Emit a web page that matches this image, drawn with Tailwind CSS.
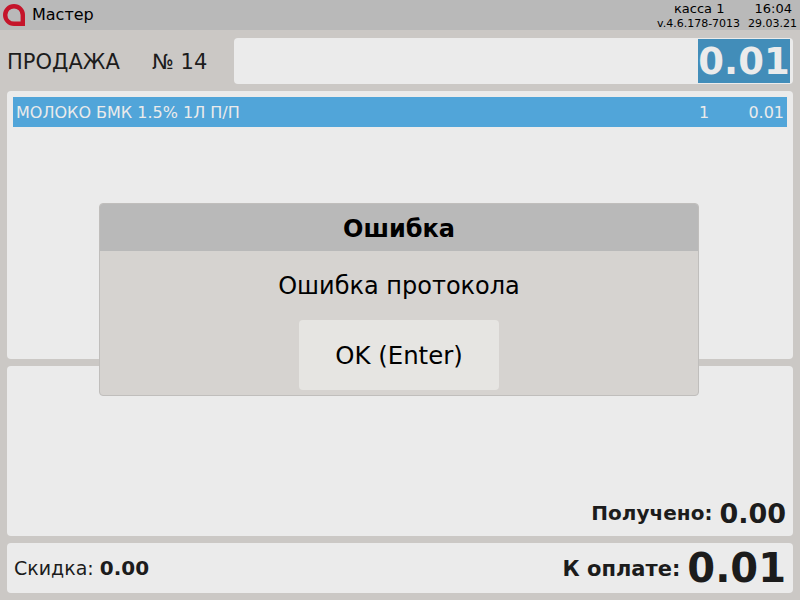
<!DOCTYPE html>
<html lang="ru">
<head>
  <meta charset="UTF-8" />
  <title>Касса</title>
  <script src="https://cdn.jsdelivr.net/npm/@tailwindcss/browser@4"></script>
</head>
<body class="relative w-[800px] h-[600px] overflow-hidden bg-[#cbc8c5] text-[#1c1c1c] font-['DejaVu_Sans',sans-serif]">

  <!-- Top bar -->
  <header class="h-[30px] bg-[#b9b9b9] flex items-center justify-between text-black">
    <div class="flex items-center">
      <svg class="ml-[3px]" width="22" height="22" viewBox="0 0 22 22">
        <path d="M11 2.2A8.8 8.8 0 0 0 11 19.8H19.8V11A8.8 8.8 0 0 0 11 2.2Z" fill="none" stroke="#c5142a" stroke-width="4.4" />
      </svg>
      <span class="ml-[7px] text-[16px]">Мастер</span>
    </div>
    <div class="w-[140px] mr-[3px] pt-[2px] text-[11px] leading-[15px]">
      <div class="flex text-[13px] leading-[15px]">
        <span class="ml-[17px]">касса 1</span>
        <span class="ml-[30px]">16:04</span>
      </div>
      <div class="flex justify-between">
        <span>v.4.6.178-7013</span>
        <span>29.03.21</span>
      </div>
    </div>
  </header>

  <!-- Sale row -->
  <div class="flex items-center mt-[8px] h-[46px] pl-[7px] pr-[7px]">
    <span class="text-[21px] w-[145px] pt-[4px]">ПРОДАЖА</span>
    <span class="text-[21px] w-[82px] pt-[4px]">№ 14</span>
    <div class="flex-1 h-[46px] bg-[#ebebeb] rounded-[4px] flex justify-end items-center pr-[3px]">
      <div class="w-[92px] h-[44px] bg-[#428db9] text-[#ebebeb] text-[37px] font-bold leading-[44px] text-center whitespace-nowrap pt-[1px]">0.01</div>
    </div>
  </div>

  <!-- Receipt list -->
  <div class="mx-[7px] mt-[7px] h-[268px] bg-[#ebebeb] rounded-[4px] p-[6px]">
    <div class="h-[30px] bg-[#51a5d9] text-[#ebebeb] text-[16px] flex items-center pl-[3px] pr-[3px] pt-[2px]">
      <span class="flex-1">МОЛОКО БМК 1.5% 1Л П/П</span>
      <span class="w-[20px]">1</span>
      <span class="w-[65px] text-right">0.01</span>
    </div>
  </div>

  <!-- Received -->
  <div class="mx-[7px] mt-[7px] h-[170px] bg-[#ebebeb] rounded-[4px] flex items-end justify-end pr-[7px] pb-[6px]">
    <span class="text-[20px] font-bold mr-[7px] mb-[2px]">Получено:</span>
    <span class="text-[27px] font-bold leading-[32px]">0.00</span>
  </div>

  <!-- Totals -->
  <div class="mx-[7px] mt-[7px] h-[50px] bg-[#ebebeb] rounded-[4px] flex items-center px-[7px]">
    <span class="text-[19px]">Скидка:</span>
    <span class="text-[20px] font-bold ml-[6px]">0.00</span>
    <span class="ml-auto text-[21px] font-bold mr-[7px] pt-[4px]">К оплате:</span>
    <span class="text-[40px] font-bold leading-[50px]">0.01</span>
  </div>

  <!-- Error dialog -->
  <div class="absolute left-[99px] top-[203px] w-[600px] h-[193px] bg-[#d6d3d0] rounded-[4px] border border-[#c0bebc] overflow-hidden text-black">
    <div class="h-[47px] bg-[#b9b9b9] text-[24px] font-bold flex items-center justify-center pt-[2px]">Ошибка</div>
    <div class="text-[24px] text-center mt-[17px] leading-[36px]">Ошибка протокола</div>
    <button class="block w-[200px] h-[70px] mt-[16px] ml-[199px] pt-[2px] bg-[#e6e5e2] rounded-[4px] text-[24.4px]">OK (Enter)</button>
  </div>

</body>
</html>
